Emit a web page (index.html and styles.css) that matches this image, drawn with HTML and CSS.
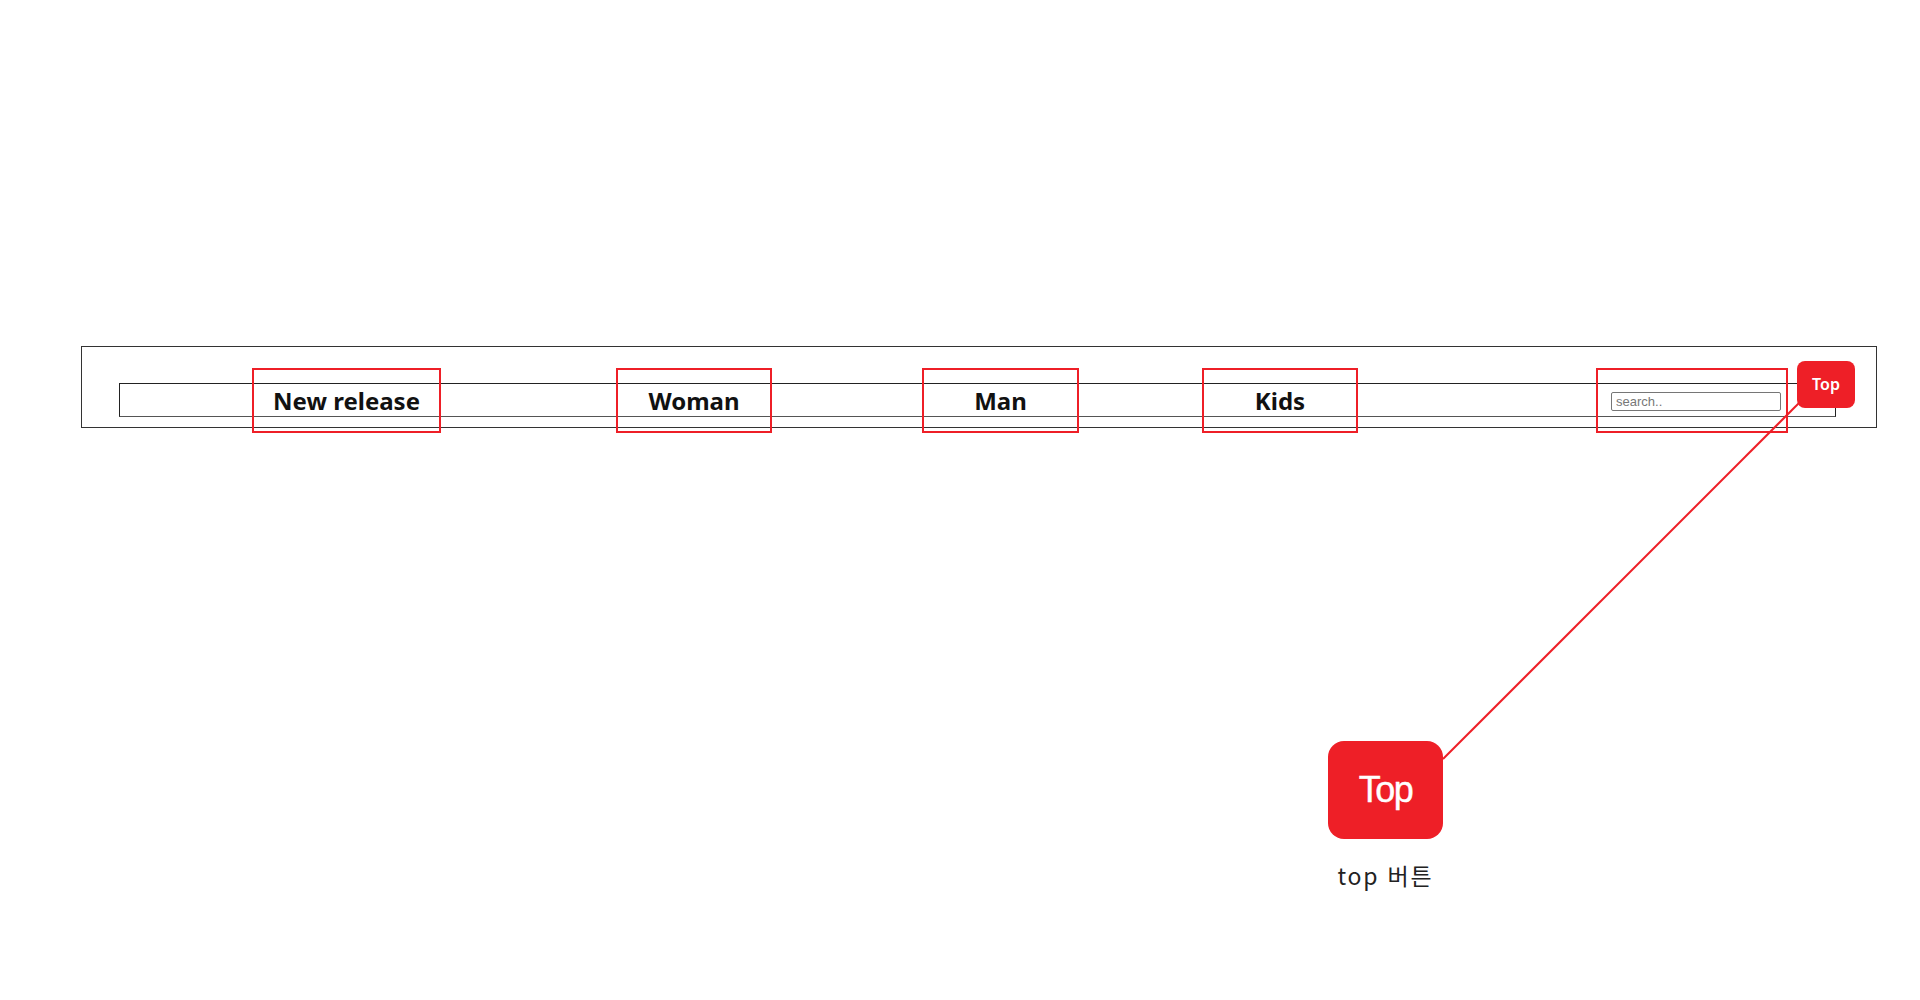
FILE: index.html
```html
<!DOCTYPE html>
<html lang="ko">
<head>
<meta charset="utf-8">
<title>GNB - top 버튼</title>
<link rel="stylesheet" href="styles.css">
</head>
<body>
<nav class="gnb">
  <ul class="menu">
    <li class="item item-new">New release</li>
    <li class="item item-woman">Woman</li>
    <li class="item item-man">Man</li>
    <li class="item item-kids">Kids</li>
    <li class="item item-search"><input class="search" type="text" placeholder="search.."></li>
  </ul>
</nav>

<svg class="leader" width="1920" height="1000" viewBox="0 0 1920 1000" xmlns="http://www.w3.org/2000/svg">
  <line x1="1799" y1="403" x2="1443" y2="759" stroke="#ee1f27" stroke-width="2"/>
</svg>

<a class="top-btn" href="#">Top</a>

<div class="callout">
  <div class="callout-btn">Top</div>
  <p class="callout-label">top 버튼</p>
</div>
</body>
</html>
```

FILE: styles.css
```css
html, body {
  margin: 0;
  padding: 0;
  background: #fff;
}

body {
  width: 1920px;
  height: 1000px;
  position: relative;
  overflow: hidden;
  padding-top: 346px;
  box-sizing: border-box;
  font-family: "Noto Sans", "Noto Sans CJK KR", sans-serif;
}

.gnb {
  margin-left: 81px;
  width: 1796px;
  box-sizing: border-box;
  border: 1px solid #333;
  padding: 36px 0 10px 37px;
}

.menu {
  list-style: none;
  margin: 0;
  padding: 0;
  width: 1717px;
  height: 34px;
  box-sizing: border-box;
  border: 1px solid #222;
  border-bottom-color: #555;
  display: flex;
  align-items: center;
}

.item {
  flex: none;
  height: 65px;
  box-sizing: border-box;
  border: 2px solid #ee1f27;
  display: flex;
  align-items: center;
  justify-content: center;
  padding-top: 1px;
  font-size: 24px;
  font-weight: 700;
  color: #111;
}

.item-new { margin-left: 132px; width: 189px; }
.item-woman { margin-left: 175px; width: 156px; }
.item-man { margin-left: 150px; width: 157px; }
.item-kids { margin-left: 123px; width: 156px; }
.item-search {
  margin-left: 238px;
  width: 192px;
  justify-content: flex-start;
  padding: 2px 0 0 13px;
}

.search {
  width: 170px;
  height: 19px;
  box-sizing: border-box;
  border: 1px solid #767676;
  border-radius: 2px;
  padding: 0 4px;
  font-family: "Liberation Sans", Arial, sans-serif;
  font-size: 13px;
  color: #333;
  outline: none;
}

.search::placeholder {
  color: #777;
}

.leader {
  position: absolute;
  left: 0;
  top: 0;
  pointer-events: none;
}

.top-btn {
  position: absolute;
  left: 1797px;
  top: 361px;
  width: 58px;
  height: 47px;
  box-sizing: border-box;
  padding-bottom: 2px;
  border-radius: 8px;
  background: #ee1f27;
  color: #fff;
  text-decoration: none;
  font-size: 16px;
  font-weight: 600;
  display: flex;
  align-items: center;
  justify-content: center;
}

.callout {
  position: absolute;
  left: 1328px;
  top: 741px;
  width: 115px;
  display: flex;
  flex-direction: column;
  align-items: center;
}

.callout-btn {
  width: 115px;
  height: 98px;
  border-radius: 16px;
  background: #ee1f27;
  color: #fff;
  font-family: "Liberation Sans", Arial, sans-serif;
  font-size: 36px;
  letter-spacing: -1.5px;
  -webkit-text-stroke: 0.4px #fff;
  display: flex;
  align-items: center;
  justify-content: center;
}

.callout-label {
  margin: 21px 0 0;
  white-space: nowrap;
  font-family: "Noto Sans CJK KR", sans-serif;
  font-size: 23px;
  line-height: 30px;
  letter-spacing: 1.8px;
  color: #222;
}
```
